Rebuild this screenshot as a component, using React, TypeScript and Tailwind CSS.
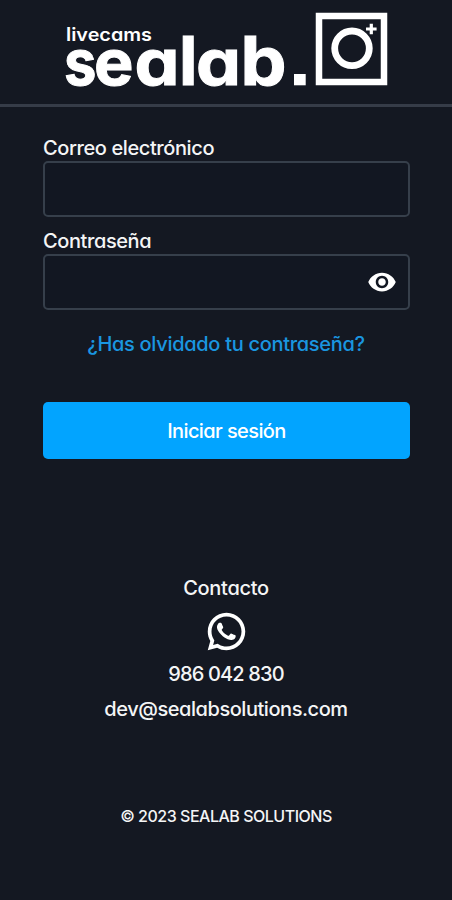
import { MdVisibility } from "react-icons/md";
import { RiWhatsappLine } from "react-icons/ri";

function Logo() {
  return (
    <svg
      viewBox="-10 0 344 76"
      className="h-[76px] w-[344px] overflow-visible fill-white font-['Inter',sans-serif] [font-feature-settings:'cv11']"
      role="img"
      aria-label="livecams sealab"
    >
      <text x="2" y="29" fontSize="18" fontWeight="600" textLength="86" lengthAdjust="spacingAndGlyphs">
        livecams
      </text>
      <text y="72.5" fontSize="64" fontWeight="700" stroke="white" strokeWidth="1">
        <tspan x="0" textLength="32.5" lengthAdjust="spacingAndGlyphs">s</tspan>
        <tspan x="30" textLength="39.5" lengthAdjust="spacingAndGlyphs">e</tspan>
        <tspan x="70.5" textLength="45" lengthAdjust="spacingAndGlyphs">a</tspan>
        <tspan x="115" fontSize="68">l</tspan>
        <tspan x="132" textLength="45" lengthAdjust="spacingAndGlyphs">a</tspan>
        <tspan x="176.5" fontSize="67" textLength="46" lengthAdjust="spacingAndGlyphs">b</tspan>
      </text>
      <rect x="230" y="62" width="11.7" height="11.3" />
      {/* CAMERA */}
      <rect x="255" y="4" width="65" height="66" fill="none" stroke="white" strokeWidth="6.5" />
      <circle cx="288" cy="36.3" r="17.3" fill="none" stroke="white" strokeWidth="6.8" />
      <path d="M307.3 11.7v10.6M302 17h10.6" stroke="white" strokeWidth="3.2" />
    </svg>
  );
}

export default function App() {
  return (
    <div className="flex h-[900px] w-full flex-col bg-[#141822] font-['Inter',sans-serif] text-[20px] leading-[26px] font-medium text-[#f4f5f6] [font-feature-settings:'cv11']">
      <header className="flex h-[107px] shrink-0 justify-center border-b-3 border-[#363c48] pt-3">
        <Logo />
      </header>

      {/* LOGIN FORM */}
      <form className="flex flex-col pt-[28px] pr-[42px] pl-[43px]">
        <label htmlFor="email" className="tracking-[-0.4px]">
          Correo electrónico
        </label>
        <input
          id="email"
          type="email"
          className="h-14 w-full rounded-[5px] border-2 border-[#363f4b] bg-[#121722] px-3 outline-none"
        />

        <label htmlFor="password" className="mt-[11px] tracking-[-0.4px]">
          Contraseña
        </label>
        <div className="flex h-14 items-center rounded-[5px] border-2 border-[#363f4b] bg-[#121722] pr-[11px]">
          <input id="password" type="password" className="min-w-0 flex-1 px-3 outline-none" />
          <MdVisibility className="size-[30px] text-white" />
        </div>

        <a href="#" className="mt-[21px] mr-px text-center tracking-[-0.3px] whitespace-nowrap text-[#1a96e0]">
          ¿Has olvidado tu contraseña?
        </a>

        <button
          type="button"
          className="mt-[45px] h-[57px] rounded-[5px] bg-[#02a4ff] tracking-[-0.6px] text-white"
        >
          Iniciar sesión
        </button>
      </form>

      {/* CONTACT */}
      <section className="mt-[116px] flex flex-col items-center">
        <h2 className="tracking-[-0.3px]">Contacto</h2>
        <RiWhatsappLine className="mt-[8px] size-[45px] text-white" />
        <p className="mt-[7px] tracking-[-0.85px]">986 042 830</p>
        <p className="mt-[9px] tracking-[-0.45px]">dev@sealabsolutions.com</p>
      </section>

      <footer className="mt-[81px] text-center text-[16px] tracking-[-0.48px]">
        © 2023 SEALAB SOLUTIONS
      </footer>
    </div>
  );
}
